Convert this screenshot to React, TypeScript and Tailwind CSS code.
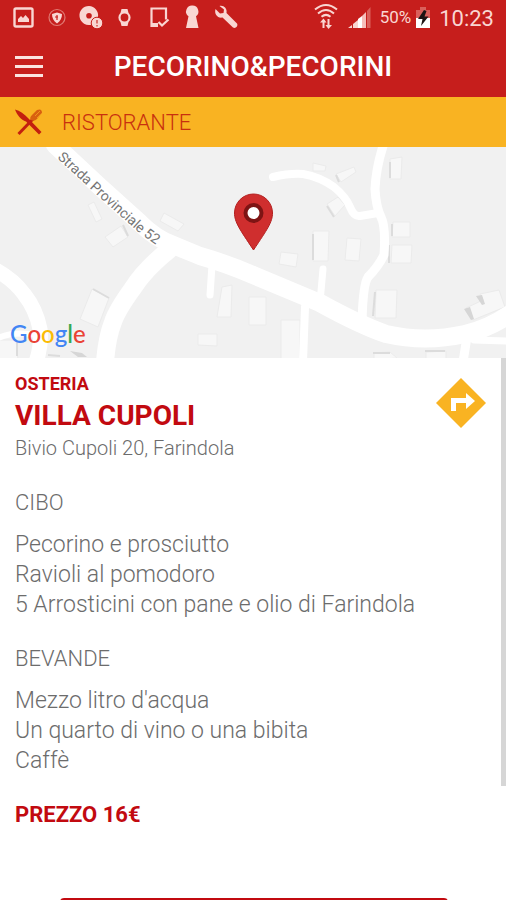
const roads = [
  { d: 'M55 -2L98 38L140 76Q155 91 173 98L200 109Q228 117 253 128L320 156Q360 178 386 187Q425 196 465 187Q488 182 510 167', w: 18 },
  { d: 'M170 102Q145 122 133 141Q117 163 113 175Q107 190 105 215', w: 18 },
  { d: 'M-4 123Q14 133 24 147Q36 162 40 182Q42 198 36 215', w: 15 },
  { d: 'M-2 191Q14 184 36 188', w: 6 },
  { d: 'M212 118L210 148', w: 7 },
  { d: 'M273 30Q290 26 303 27Q320 30 334 40Q346 50 350 60Q354 70 360 69L378 66', w: 8 },
  { d: 'M384 -4Q376 20 375 42Q376 60 381 70Q386 80 384 108Q378 120 368 130Q363 137 362 175', w: 9 },
  { d: 'M323 122L320 155', w: 7 },
  { d: 'M305 160L303 215', w: 8 },
  { d: 'M467 190L463 215', w: 9 },
  { d: 'M474 193L510 194', w: 7 },
]

const buildings = [
  '88 58 94 55 102 72 96 75',
  '105 90 121 79 128 90 113 100',
  '164 66 184 77 178 84 160 74',
  '92 142 109 151 98 180 80 172',
  '222 140 232 138 231 170 217 170',
  '198 187 217 187 217 199 198 198',
  '249 150 266 150 266 178 249 178',
  '281 105 298 107 296 120 279 117',
  '313 84 329 84 328 114 313 114',
  '347 91 361 92 359 114 345 113',
  '313 16 326 19 325 24 313 24',
  '336 27 354 20 356 25 341 35',
  '390 12 402 10 401 32 390 32',
  '393 75 410 75 410 90 392 90',
  '392 98 412 98 411 116 391 116',
  '376 143 397 143 396 171 375 171',
  '327 57 338 50 345 58 335 69',
  '281 173 300 173 300 213 281 213',
  '466 161 483 153 480 147 499 143 505 160 473 173',
  '374 206 390 205 397 211 374 213',
  '426 205 446 204 446 213 426 213',
  '-2 193 16 193 18 213 -2 213',
]

const shadows = [
  'M123 78L128 89',
  'M93 142L109 151',
  'M327 59L334 70',
  'M390 15V31',
  'M389 98V116',
  'M375 145L373 169',
  'M392 77V89',
  'M313 87V113',
  'M336 28L339 35',
  'M17 195V209',
  'M48 208L60 209',
  'M373 206H390',
  'M425 204H445',
]

function StatusIcons() {
  return (
    <svg viewBox="0 0 240 36" className="h-9 w-60" fill="#f9d6d2" aria-hidden="true">
      {/* picture */}
      <rect x="14.5" y="8.5" width="18" height="18" rx="1.5" fill="none" stroke="#f9d6d2" strokeWidth="2.4" />
      <path d="M18 22v-3l3-3 2 2 2.5-3 3.5 4v3z" />
      {/* shield */}
      <circle cx="57" cy="17.5" r="8" fill="none" stroke="#e07a73" strokeWidth="1.2" />
      <path d="M57 12.5l5 1.5c0 4-1.5 7-5 9.5c-3.5-2.5-5-5.5-5-9.5z" />
      <path d="M57 15v5M55 17h3" stroke="#c61e1c" strokeWidth="1.2" />
      {/* disc */}
      <path fillRule="evenodd" d="M89 6a9.5 9.5 0 1 0 3 18.5v-3.5l6-4a9.5 9.5 0 0 0-9-11zm0 7a2.8 2.8 0 1 1 0 5.6a2.8 2.8 0 0 1 0-5.6z" />
      <circle cx="97" cy="23" r="5.8" stroke="#c61e1c" strokeWidth="1" />
      <path d="M97 20v3.5M97 25v1.5" stroke="#d9665f" strokeWidth="1.8" />
      {/* watch */}
      <path d="M121.5 9h6l1 4h-8zM121.5 26h6l1-4h-8z" />
      <circle cx="124.5" cy="17.5" r="5" fill="none" stroke="#f9d6d2" strokeWidth="2.2" />
      {/* device check */}
      <path d="M158 26h-6.5V8.5h14.5v11" fill="none" stroke="#f9d6d2" strokeWidth="2.2" />
      <path d="M152 23h6v4h-6z" />
      <path d="M158.5 22l3.5 3.5l6.5-6" fill="none" stroke="#f9d6d2" strokeWidth="2.2" />
      {/* keyhole */}
      <path d="M192.5 5.5a6 6 0 0 1 3.5 10.8l2.5 11.7h-12.5l2.5-11.7a6 6 0 0 1 4-10.8z" />
      {/* wrench */}
      <path d="M215.5 9l4.5 4.5l3.5-.5l.5-3.5l-4.5-3.5c4-1 8 2.5 7 7l10.5 10.5c1.5 2.5-1.5 5.5-4 4l-10.5-10c-5 1-8.5-3.5-7-8.5z" />
    </svg>
  )
}

function SignalIcons() {
  return (
    <svg viewBox="0 0 62 36" className="h-9 w-[62px]" aria-hidden="true">
      <g fill="none" stroke="#f9d6d2" strokeWidth="2">
        <path d="M3 9.5Q14 .5 25 9.5" />
        <path d="M6 13.5Q14 6.5 22 13.5" />
        <path d="M9.5 16.8Q14 13 18.5 16.8" />
        <path d="M11.5 28v-8M16.5 19v8" />
      </g>
      <path d="M8 22.5l3.5-4l3 4zM13.5 25l3 4l3.5-4z" fill="#f9d6d2" />
      <path d="M36 28l4-3v3zM41 28v-4l5-4v8z" fill="#f9d6d2" />
      <path d="M46 28v-9l4-3v12z" fill="#fff" />
      <path d="M50 28v-12l4-4v16z" fill="#f6beba" />
      <path d="M55 28V11l3.5-4v21z" fill="#d9605b" />
    </svg>
  )
}

function BatteryIcon() {
  return (
    <svg viewBox="0 0 16 36" className="h-9 w-4" aria-hidden="true">
      <path d="M1 10h4V7h6v3h4v8H1z" fill="#d9605b" />
      <path d="M1 18h14v10H1z" fill="#fff" />
      <path d="M9 10l-6 9h4.5L6 26l7.5-9.5H9.5l2-5.5z" fill="#1d1414" />
    </svg>
  )
}

function Cutlery() {
  return (
    <svg viewBox="0 0 30 28" className="h-7 w-[30px]" fill="none" aria-hidden="true">
      <path d="M3.5 26L18 11" stroke="#c3200f" strokeWidth="3" />
      <path d="M17 7l5-5q5-2 5 3l-5 6q-3 3-6 1q-2-2 1-5z" fill="#d9600f" />
      <path d="M20 8l5-5M22 10l5-5" stroke="#f0921c" strokeWidth="1" />
      <path d="M0 1.5c5 1 9 4.5 14 9.5l12.5 13l-2.5 2.5L11 13.5C6 12 2 7 0 1.5z" fill="#c3200f" />
    </svg>
  )
}

function Map() {
  return (
    <div className="relative h-[211px] shrink-0 overflow-hidden bg-[#f1f1f1]">
      <svg viewBox="0 0 506 211" preserveAspectRatio="xMidYMid slice" className="h-full w-full" role="img" aria-label="Mappa">
        <g fill="#f7f7f7" stroke="#ebebeb" strokeWidth="1">
          {buildings.map((p) => (
            <polygon key={p} points={p} />
          ))}
        </g>
        <g fill="none" stroke="#dcdcdc" strokeWidth="2">
          {shadows.map((d) => (
            <path key={d} d={d} />
          ))}
        </g>
        <path d="M476 149l6-1l3 9l-3 1zM464 162l6-2l4 12l-3 1zM70 204l12 2l5 4h-9z" fill="#d6d6d6" />
        <g fill="none" stroke="#fff" strokeLinecap="round" strokeLinejoin="round">
          {roads.map((r) => (
            <path key={r.d} d={r.d} strokeWidth={r.w} />
          ))}
        </g>
        <path id="strada" d="M57 11L96 47L135 82Q149 94 174 109" fill="none" />
        <text className="font-['Roboto',sans-serif] text-[14px]" fill="#757575">
          <textPath href="#strada">Strada Provinciale 52</textPath>
        </text>
        {/* pin */}
        <path d="M253.5 47a19 19 0 0 1 19 19c0 9-5 16-19 37c-14-21-19-28-19-37a19 19 0 0 1 19-19z" fill="#cf2e2e" stroke="#b32020" strokeWidth="1" />
        <circle cx="253.5" cy="66" r="8" fill="#fff" stroke="#7e1414" strokeWidth="4" />
      </svg>
      <div className="absolute bottom-2 left-2.5 font-['Lato',sans-serif] text-[24px] leading-8 font-medium" aria-label="Google">
        <span className="text-[#4285f4]">G</span>
        <span className="text-[#ea4335]">o</span>
        <span className="text-[#fbbc05]">o</span>
        <span className="text-[#4285f4]">g</span>
        <span className="text-[#34a853]">l</span>
        <span className="text-[#ea4335]">e</span>
      </div>
    </div>
  )
}

function MenuSection({ title, items }: { title: string; items: string[] }) {
  return (
    <section className="mb-6 font-light">
      <h3 className="mb-3 text-[22px] leading-[30px]">{title}</h3>
      <ul className="text-[23px] leading-[30px]">
        {items.map((item) => (
          <li key={item}>{item}</li>
        ))}
      </ul>
    </section>
  )
}

export default function App() {
  return (
    <div className="flex h-screen flex-col overflow-hidden bg-white font-['Roboto','Liberation_Sans',sans-serif] text-[#6c6c6c]">
      <header className="shrink-0 bg-[#c61e1c] text-white">
        <div className="flex h-9 items-center justify-between pr-3 text-[#f9d6d2]">
          <StatusIcons />
          <div className="flex items-center">
            <SignalIcons />
            <span className="ml-1.5 text-[17px]">50%</span>
            <span className="ml-1"><BatteryIcon /></span>
            <span className="ml-2 text-[22px]">10:23</span>
          </div>
        </div>
        <div className="flex h-[61px] items-center px-[15px]">
          <button type="button" aria-label="Menu" className="flex w-7 flex-col gap-1.5">
            <span className="h-[3px] bg-[#fbe3e0]" />
            <span className="h-[3px] bg-[#fbe3e0]" />
            <span className="h-[3px] bg-[#fbe3e0]" />
          </button>
          <h1 className="flex-1 text-center text-[28px] font-medium">PECORINO&amp;PECORINI</h1>
          <div className="w-7" />
        </div>
      </header>

      <div className="flex h-[50px] shrink-0 items-center gap-[17px] bg-[#f9b322] px-[15px]">
        <Cutlery />
        <h2 className="text-[22px] font-light text-[#c8300f]">RISTORANTE</h2>
      </div>

      <Map />

      <main className="flex min-h-0 flex-1">
        <div className="flex-1 pt-3.5 pl-[15px]">
          <div className="mb-7 flex justify-between pr-[15px]">
            <div>
              <p className="text-[18px] leading-6 font-bold text-[#c20a10]">OSTERIA</p>
              <h2 className="my-1 text-[28px] leading-8 font-bold text-[#c20a10]">VILLA CUPOLI</h2>
              <p className="text-[20px] leading-6 font-light">Bivio Cupoli 20, Farindola</p>
            </div>
            <a href="#indicazioni" aria-label="Indicazioni" className="mt-1.5">
              <svg viewBox="0 0 50 50" className="size-[50px]">
                <path d="M25 0L50 25L25 50L0 25z" fill="#f9b322" />
                <path d="M15 33V20h15v-5l9 8l-9 8v-6H20v8z" fill="#fff" />
              </svg>
            </a>
          </div>

          <MenuSection title="CIBO" items={['Pecorino e prosciutto', 'Ravioli al pomodoro', '5 Arrosticini con pane e olio di Farindola']} />
          <MenuSection title="BEVANDE" items={["Mezzo litro d'acqua", 'Un quarto di vino o una bibita', 'Caffè']} />

          <p className="text-[22px] leading-[30px] font-bold text-[#c20a10]">PREZZO 16€</p>
          <button type="button" aria-label="Prenota" className="mt-[68px] ml-[45px] block h-14 w-[388px] rounded bg-[#c20a10]" />
        </div>
        <div className="h-[79%] w-[5px] shrink-0 bg-[#d6d6d6]" />
      </main>
    </div>
  )
}
